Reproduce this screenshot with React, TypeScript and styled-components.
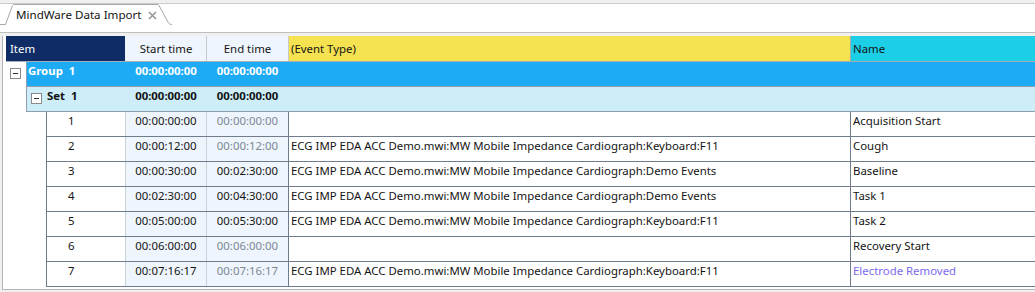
import { createGlobalStyle } from "styled-components";
import styled from "styled-components";

const GlobalStyle = createGlobalStyle`
  html, body {
    margin: 0;
    padding: 0;
    background: #f0f0f0;
    overflow: hidden;
  }
  body {
    font-family: "Noto Sans", "Open Sans", sans-serif;
    font-size: 11.4px;
    color: #141414;
  }
`;

const COL = { item: 119, start: 81, end: 82, event: 562 };

const DIVIDER = "#6f7c8b";
const SOFT = "#c9d0d6";
const TIME_BG = "#eef5fd";
const MUTED = "#7b8793";

const events = {
  keyboard: "ECG IMP EDA ACC Demo.mwi:MW Mobile Impedance Cardiograph:Keyboard:F11",
  demo: "ECG IMP EDA ACC Demo.mwi:MW Mobile Impedance Cardiograph:Demo Events",
};

interface Entry {
  n: number;
  start: string;
  end: string;
  event: string;
  name: string;
  flagged?: boolean;
}

const rows: Entry[] = [
  { n: 1, start: "00:00:00:00", end: "00:00:00:00", event: "", name: "Acquisition Start" },
  { n: 2, start: "00:00:12:00", end: "00:00:12:00", event: events.keyboard, name: "Cough" },
  { n: 3, start: "00:00:30:00", end: "00:02:30:00", event: events.demo, name: "Baseline" },
  { n: 4, start: "00:02:30:00", end: "00:04:30:00", event: events.demo, name: "Task 1" },
  { n: 5, start: "00:05:00:00", end: "00:05:30:00", event: events.keyboard, name: "Task 2" },
  { n: 6, start: "00:06:00:00", end: "00:06:00:00", event: "", name: "Recovery Start" },
  { n: 7, start: "00:07:16:17", end: "00:07:16:17", event: events.keyboard, name: "Electrode Removed", flagged: true },
];

const Window = styled.div`
  width: 1035px;
  height: 292px;
  display: flex;
  flex-direction: column;
  background: #f0f0f0;
`;

const TabStrip = styled.div`
  margin-top: 3px;
  height: 28px;
  border-top: 1px solid #cbcbcb;
  border-bottom: 1px solid #bdbdbd;
  background: #fff;
  display: flex;
  align-items: flex-start;
`;

const Tab = styled.div`
  position: relative;
  width: 172px;
  height: 21px;
  display: flex;
  align-items: center;
  gap: 6px;
  padding-left: 16px;
  box-sizing: border-box;
  font-size: 11.6px;
  color: #141414;
`;

const TabOutline = styled.svg`
  position: absolute;
  left: 0;
  top: 0;
  z-index: 0;
`;

const TabLabel = styled.span`
  position: relative;
  z-index: 1;
  white-space: nowrap;
`;

const TabClose = styled.svg`
  position: relative;
  z-index: 1;
  margin-top: 1px;
`;

const Panel = styled.div`
  flex: 1;
  padding-top: 3px;
  display: flex;
  flex-direction: column;
`;

const Frame = styled.div`
  margin-left: 2px;
  border-left: 1px solid #b2b2b2;
  border-bottom: 1px solid #b8b8b8;
  background: #fff;
  padding-left: 3px;
  height: 253px;
  overflow: hidden;
  display: flex;
  flex-direction: column;
`;

const HeaderRow = styled.div`
  display: flex;
  height: 25px;
  flex-shrink: 0;
  border-bottom: 1px solid #a3aeb9;
`;

const HeadCell = styled.div<{ $w?: number; $bg: string; $fg?: string; $align?: string; $line?: string; $pad?: number }>`
  ${(p) => (p.$w ? `width: ${p.$w}px; flex-shrink: 0;` : "flex: 1;")}
  box-sizing: border-box;
  background: ${(p) => p.$bg};
  color: ${(p) => p.$fg ?? "#141414"};
  border-left: 1px solid ${(p) => p.$line ?? "transparent"};
  display: flex;
  align-items: center;
  justify-content: ${(p) => p.$align ?? "flex-start"};
  padding: 0 ${(p) => p.$pad ?? 2}px;
  white-space: nowrap;
`;

const Row = styled.div`
  display: flex;
  height: 25px;
  flex-shrink: 0;
`;

const Gutter = styled.div<{ $w: number }>`
  width: ${(p) => p.$w}px;
  flex-shrink: 0;
  display: flex;
  align-items: flex-start;
  padding: 6px 0 0 4px;
  box-sizing: border-box;
`;

const TreeBody = styled.div<{ $bg: string; $fg: string }>`
  flex: 1;
  display: flex;
  background: ${(p) => p.$bg};
  color: ${(p) => p.$fg};
  font-weight: bold;
  border-left: 1px solid #8f9dac;
  border-bottom: 1px solid #8f9dac;
`;

const DataBody = styled.div`
  flex: 1;
  display: flex;
  border-left: 1px solid ${DIVIDER};
  border-bottom: 1px solid ${DIVIDER};
`;

const Cell = styled.div<{ $w?: number; $bg?: string; $fg?: string; $center?: boolean; $line?: string; $pad?: number }>`
  ${(p) => (p.$w ? `width: ${p.$w}px; flex-shrink: 0;` : "flex: 1;")}
  box-sizing: border-box;
  background: ${(p) => p.$bg ?? "transparent"};
  color: ${(p) => p.$fg ?? "inherit"};
  border-left: 1px solid ${(p) => p.$line ?? "transparent"};
  text-align: ${(p) => (p.$center ? "center" : "left")};
  padding: 1px ${(p) => p.$pad ?? 2}px 0;
  line-height: 16px;
  white-space: pre;
  overflow: hidden;
`;

const LabelCell = styled(Cell)`
  display: flex;
  align-items: flex-start;
  gap: 5px;
`;

const Expander = styled.div<{ $offset?: number }>`
  width: 11px;
  height: 11px;
  margin-top: ${(p) => p.$offset ?? 0}px;
  flex-shrink: 0;
  box-sizing: border-box;
  border: 1px solid #8a8a8a;
  background: #fff;
  display: flex;
  align-items: center;
  justify-content: center;
  &::after {
    content: "";
    width: 5px;
    height: 1px;
    background: #333;
  }
`;

const Name = styled.span<{ $flagged?: boolean }>`
  color: ${(p) => (p.$flagged ? "#7c6af0" : "inherit")};
`;

function TreeRow({ level, label, bg, fg }: { level: number; label: string; bg: string; fg: string }) {
  return (
    <Row>
      <Gutter $w={20}>{level === 0 && <Expander />}</Gutter>
      <TreeBody $bg={bg} $fg={fg}>
        <LabelCell $w={COL.item - 21} $pad={level === 0 ? 0 : 3}>
          {level > 0 && <Expander $offset={5} />}
          <span>{label}</span>
        </LabelCell>
        <Cell $w={COL.start} $center>
          00:00:00:00
        </Cell>
        <Cell $w={COL.end} $center>
          00:00:00:00
        </Cell>
        <Cell $w={COL.event} />
        <Cell />
      </TreeBody>
    </Row>
  );
}

export default function App() {
  return (
    <Window>
      <GlobalStyle />
      <TabStrip>
        <Tab>
          <TabOutline width="175" height="22" viewBox="0 0 175 22">
            <path
              d="M0 20.5 H5.5 L12.5 1.5 Q13 0.5 14.5 0.5 H157 Q158.5 0.5 159 1.5 L168.5 19 Q169.5 20.5 172 20.5"
              fill="#fff"
              stroke="#a6a6a6"
              strokeWidth="1"
            />
          </TabOutline>
          <TabLabel>MindWare Data Import</TabLabel>
          <TabClose width="9" height="9" viewBox="0 0 9 9">
            <path d="M1 1 L8 8 M8 1 L1 8" stroke="#9a9a9a" strokeWidth="1.7" />
          </TabClose>
        </Tab>
      </TabStrip>
      <Panel>
        <Frame>
          <HeaderRow>
            <HeadCell $w={COL.item} $bg="#0f2c67" $fg="#fff" $pad={3}>
              Item
            </HeadCell>
            <HeadCell $w={COL.start} $bg={TIME_BG} $align="center">
              Start time
            </HeadCell>
            <HeadCell $w={COL.end} $bg={TIME_BG} $align="center" $line="#c4c9ce">
              End time
            </HeadCell>
            <HeadCell $w={COL.event} $bg="#f5e251" $line="#c9c9c9">
              (Event Type)
            </HeadCell>
            <HeadCell $bg="#1ccfe7" $line="#a8a8a8">
              Name
            </HeadCell>
          </HeaderRow>
          <TreeRow level={0} label="Group  1" bg="#1eabf6" fg="#fff" />
          <TreeRow level={1} label="Set  1" bg="#cdeef9" fg="#111" />
          {rows.map((r) => (
            <Row key={r.n}>
              <Gutter $w={40} />
              <DataBody>
                <Cell $w={COL.item - 41} $pad={20}>
                  {r.n}
                </Cell>
                <Cell $w={COL.start} $bg={TIME_BG} $center $line={SOFT}>
                  {r.start}
                </Cell>
                <Cell $w={COL.end} $bg={TIME_BG} $center $line={SOFT} $fg={r.start === r.end ? MUTED : undefined}>
                  {r.end}
                </Cell>
                <Cell $w={COL.event} $line={DIVIDER}>
                  {r.event}
                </Cell>
                <Cell $line={DIVIDER}>
                  <Name $flagged={r.flagged}>{r.name}</Name>
                </Cell>
              </DataBody>
            </Row>
          ))}
        </Frame>
      </Panel>
    </Window>
  );
}
